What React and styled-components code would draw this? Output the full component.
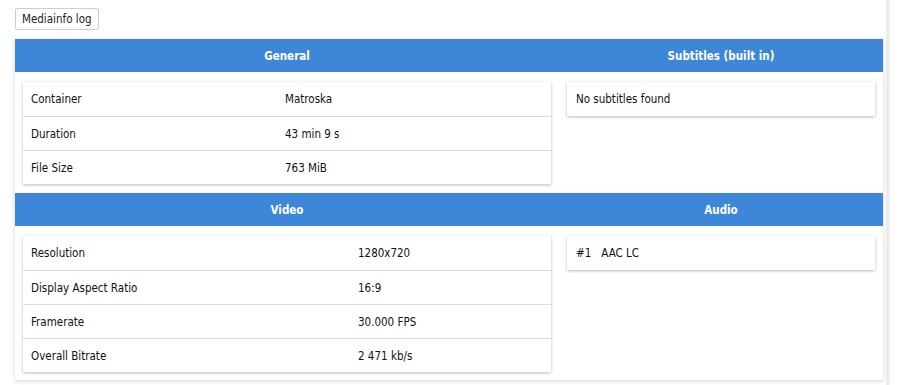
import React from "react";
import styled, { createGlobalStyle } from "styled-components";

const Global = createGlobalStyle`
  html, body { margin: 0; padding: 0; background: #fff; }
  body {
    font-family: Tahoma, "DejaVu Sans Condensed", "Liberation Sans", sans-serif;
    font-size: 11.5px;
    color: #111;
  }
`;

const Page = styled.div`
  width: 889px;
  height: 385px;
  box-sizing: border-box;
  padding: 8px 0 0 15px;
  border-right: 3px solid #ececec;
  box-shadow: 1px 0 2px rgba(0, 0, 0, 0.06);
`;

const LogButton = styled.button`
  font: inherit;
  color: #222;
  height: 22px;
  padding: 0 6px;
  background: #fff;
  border: 1px solid #cfcfcf;
  border-radius: 2px;
  margin-bottom: 9px;
  display: block;
`;

const Panel = styled.div`
  width: 868px;
  display: grid;
  grid-template-columns: 544px 324px;
  background: #fff;
  box-shadow: 0 1px 4px rgba(0, 0, 0, 0.18);
`;

const Header = styled.div`
  height: 33px;
  background: #3e87d8;
  color: #fff;
  font-weight: bold;
  display: flex;
  align-items: center;
  justify-content: center;
`;

const Cell = styled.div`
  padding: 10px 8px ${(p) => p.$bottom || 9}px 8px;
  display: flex;
  flex-direction: column;
  align-items: stretch;
`;

const Card = styled.div`
  background: #fff;
  box-shadow: 0 1px 3px rgba(0, 0, 0, 0.28);
  display: grid;
  grid-template-columns: ${(p) => p.$label}px 1fr;
`;

const Row = styled.div`
  display: contents;
  &:not(:first-child) > * {
    border-top: 1px solid #dcdcdc;
  }
`;

const Text = styled.div`
  height: 34px;
  box-sizing: border-box;
  display: flex;
  align-items: center;
  padding-left: 8px;
`;

const SingleCard = styled.div`
  background: #fff;
  box-shadow: 0 1px 3px rgba(0, 0, 0, 0.28);
  height: 34px;
  display: flex;
  align-items: center;
  padding-left: 9px;
  gap: 10px;
`;

const InfoTable = ({ label, rows }) => (
  <Card $label={label}>
    {rows.map(([k, v]) => (
      <Row key={k}>
        <Text>{k}</Text>
        <Text>{v}</Text>
      </Row>
    ))}
  </Card>
);

export default function App() {
  return (
    <>
      <Global />
      <Page>
        <LogButton>Mediainfo log</LogButton>
        <Panel>
          <Header>General</Header>
          <Header>Subtitles (built in)</Header>
          <Cell>
            <InfoTable
              label={254}
              rows={[
                ["Container", "Matroska"],
                ["Duration", "43 min 9 s"],
                ["File Size", "763 MiB"],
              ]}
            />
          </Cell>
          <Cell>
            <SingleCard>No subtitles found</SingleCard>
          </Cell>
          <Header>Video</Header>
          <Header>Audio</Header>
          <Cell $bottom={8}>
            <InfoTable
              label={327}
              rows={[
                ["Resolution", "1280x720"],
                ["Display Aspect Ratio", "16:9"],
                ["Framerate", "30.000 FPS"],
                ["Overall Bitrate", "2 471 kb/s"],
              ]}
            />
          </Cell>
          <Cell $bottom={8}>
            <SingleCard>
              <span>#1</span>
              <span>AAC LC</span>
            </SingleCard>
          </Cell>
        </Panel>
      </Page>
    </>
  );
}
